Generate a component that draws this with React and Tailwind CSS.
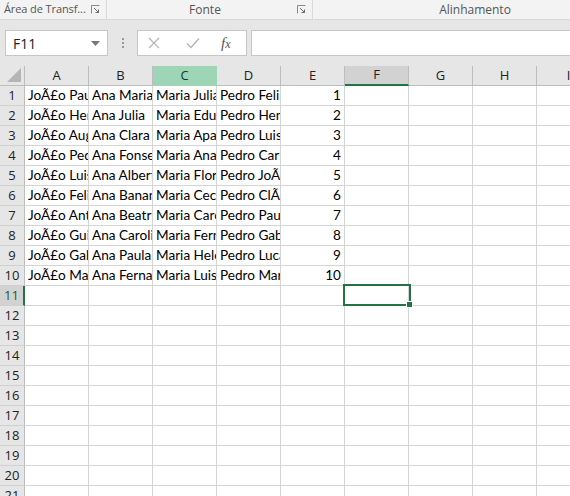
import React from 'react';

const cols = ['A', 'B', 'C', 'D', 'E', 'F', 'G', 'H', 'I'];

const data = [
  ['JoÃ£o Paulo', 'Ana Maria', 'Maria Julia', 'Pedro Felipe', 1],
  ['JoÃ£o Henrique', 'Ana Julia', 'Maria Eduarda', 'Pedro Henrique', 2],
  ['JoÃ£o Augusto', 'Ana Clara', 'Maria Aparecida', 'Pedro Luis', 3],
  ['JoÃ£o Pedro', 'Ana Fonseca', 'Maria Ana', 'Pedro Carlos', 4],
  ['JoÃ£o Luis', 'Ana Alberta', 'Maria Flor', 'Pedro JoÃ£o', 5],
  ['JoÃ£o Felipe', 'Ana Banana', 'Maria Cecilia', 'Pedro ClÃ¡udio', 6],
  ['JoÃ£o Antonio', 'Ana Beatriz', 'Maria Carolina', 'Pedro Paulo', 7],
  ['JoÃ£o Guilherme', 'Ana Carolina', 'Maria Fernanda', 'Pedro Gabriel', 8],
  ['JoÃ£o Gabriel', 'Ana Paula', 'Maria Helena', 'Pedro Lucas', 9],
  ['JoÃ£o Marcos', 'Ana Fernanda', 'Maria Luisa', 'Pedro Marcos', 10],
];

const uiFont = { fontFamily: '"Open Sans", "Noto Sans", sans-serif' };
const cellFont = { fontFamily: 'Lato, "Liberation Sans", sans-serif' };

const Launcher = () => (
  <svg width="9" height="9" viewBox="0 0 9 9" className="shrink-0">
    <path d="M0.5 8.5V0.5H8.5" fill="none" stroke="#8a8a8a" strokeWidth="1" />
    <path d="M3 3L7.5 7.5M4.5 7.5H7.5V4.5" fill="none" stroke="#6d6d6d" strokeWidth="1" />
  </svg>
);

const Ribbon = () => (
  <div className="flex h-[20px] bg-[#f3f3f3] border-b border-[#d9d9d9] text-[11px] text-[#555]" style={uiFont}>
    <div className="w-[107px] shrink-0 flex items-center justify-between pl-[4px] pr-[6px] border-r border-[#d9d9d9]">
      <span className="whitespace-nowrap tracking-[-0.1px]">Área de Transf...</span>
      <Launcher />
    </div>
    <div className="w-[206px] shrink-0 flex items-center pr-[6px] border-r border-[#d9d9d9]">
      <span className="flex-1 text-center pl-[6px] text-[12px]">Fonte</span>
      <Launcher />
    </div>
    <div className="w-[324px] shrink-0 flex items-center justify-center">
      <span className="text-[12px]">Alinhamento</span>
    </div>
  </div>
);

const FormulaBar = () => (
  <div className="bg-[#e6e6e6] pt-[10px] pb-[10px]">
    <div className="flex h-[26px] items-stretch">
      <div className="ml-[5px] w-[103px] shrink-0 bg-white border border-[#c6c6c6] flex items-center justify-between pl-[7px] pr-[7px] text-[14px] text-[#222]" style={uiFont}>
        <span>F11</span>
        <svg width="9" height="5" viewBox="0 0 9 5">
          <path d="M0 0H9L4.5 5Z" fill="#777" />
        </svg>
      </div>
      <div className="w-[29px] shrink-0 flex flex-col items-center justify-center gap-[2px]">
        <span className="w-[2px] h-[2px] bg-[#9a9a9a]" />
        <span className="w-[2px] h-[2px] bg-[#9a9a9a]" />
        <span className="w-[2px] h-[2px] bg-[#9a9a9a]" />
      </div>
      <div className="w-[110px] shrink-0 bg-white border border-[#c6c6c6] flex items-center">
        <svg width="12" height="12" viewBox="0 0 12 12" className="ml-[10px]">
          <path d="M1 1L11 11M11 1L1 11" stroke="#b5b5b5" strokeWidth="1.2" />
        </svg>
        <svg width="14" height="12" viewBox="0 0 14 12" className="ml-[26px]">
          <path d="M1 6.5L5 10.5L13 1.5" fill="none" stroke="#b5b5b5" strokeWidth="1.4" />
        </svg>
        <span className="ml-[21px] text-[15px] italic text-[#555]" style={{ fontFamily: '"Liberation Serif", "DejaVu Serif", serif' }}>
          f<span className="text-[12px]">x</span>
        </span>
      </div>
      <div className="ml-[4px] flex-1 bg-white border border-[#c6c6c6] border-r-0" />
    </div>
  </div>
);

const ColumnHeader = () => (
  <div className="flex h-[20px]" style={uiFont}>
    <div className="w-[25px] shrink-0 bg-[#e6e6e6] border-r border-b border-[#bdbdbd] relative">
      <svg width="14" height="14" viewBox="0 0 14 14" className="absolute right-[3px] bottom-[3px]">
        <path d="M14 0V14H0Z" fill="#b5b5b5" />
      </svg>
    </div>
    {cols.map((c) => {
      const isC = c === 'C';
      const isF = c === 'F';
      return (
        <div
          key={c}
          className={`w-[64px] shrink-0 flex items-center justify-center text-[13px] ${
            isC
              ? 'bg-[#9fd5b7] text-[#0e3d24] border-r border-b border-[#9fd5b7]'
              : isF
              ? 'bg-[#d2d2d2] text-[#222] border-r border-[#bdbdbd] border-b-2 border-b-[#217346]'
              : 'bg-[#e6e6e6] text-[#222] border-r border-b border-[#bdbdbd]'
          }`}
        >
          {c}
        </div>
      );
    })}
  </div>
);

const Row = ({ n, values }) => {
  const active = n === 11;
  return (
    <div className="flex h-[20px]">
      <div
        className={`w-[25px] shrink-0 flex items-center justify-center text-[13px] border-b border-[#d0d0d0] ${
          active
            ? 'bg-[#d2d2d2] text-[#1d5b38] border-r-2 border-r-[#217346]'
            : 'bg-[#e6e6e6] text-[#222] border-r border-r-[#bdbdbd]'
        }`}
        style={uiFont}
      >
        {n}
      </div>
      {cols.map((c, i) => {
        const v = values ? values[i] : undefined;
        const isNum = typeof v === 'number';
        return (
          <div
            key={c}
            className={`w-[64px] shrink-0 border-r border-b border-[#d4d4d4] overflow-hidden whitespace-nowrap text-[13.6px] leading-[19px] text-black ${
              isNum ? 'text-right pr-[3px]' : 'pl-[3px]'
            }`}
            style={cellFont}
          >
            {v}
          </div>
        );
      })}
    </div>
  );
};

export default function App() {
  const rows = [];
  for (let n = 1; n <= 21; n++) rows.push(n);

  return (
    <div className="w-[570px] h-[496px] overflow-hidden bg-white">
      <Ribbon />
      <FormulaBar />
      <div className="relative">
        <ColumnHeader />
        {rows.map((n) => (
          <Row key={n} n={n} values={data[n - 1]} />
        ))}
        {/* selected cell F11 */}
        <div className="absolute left-[343px] top-[218px] w-[68px] h-[22px] border-2 border-[#217346]" />
        <div className="absolute left-[406px] top-[235px] w-[7px] h-[7px] bg-[#217346] border border-white" />
      </div>
    </div>
  );
}
